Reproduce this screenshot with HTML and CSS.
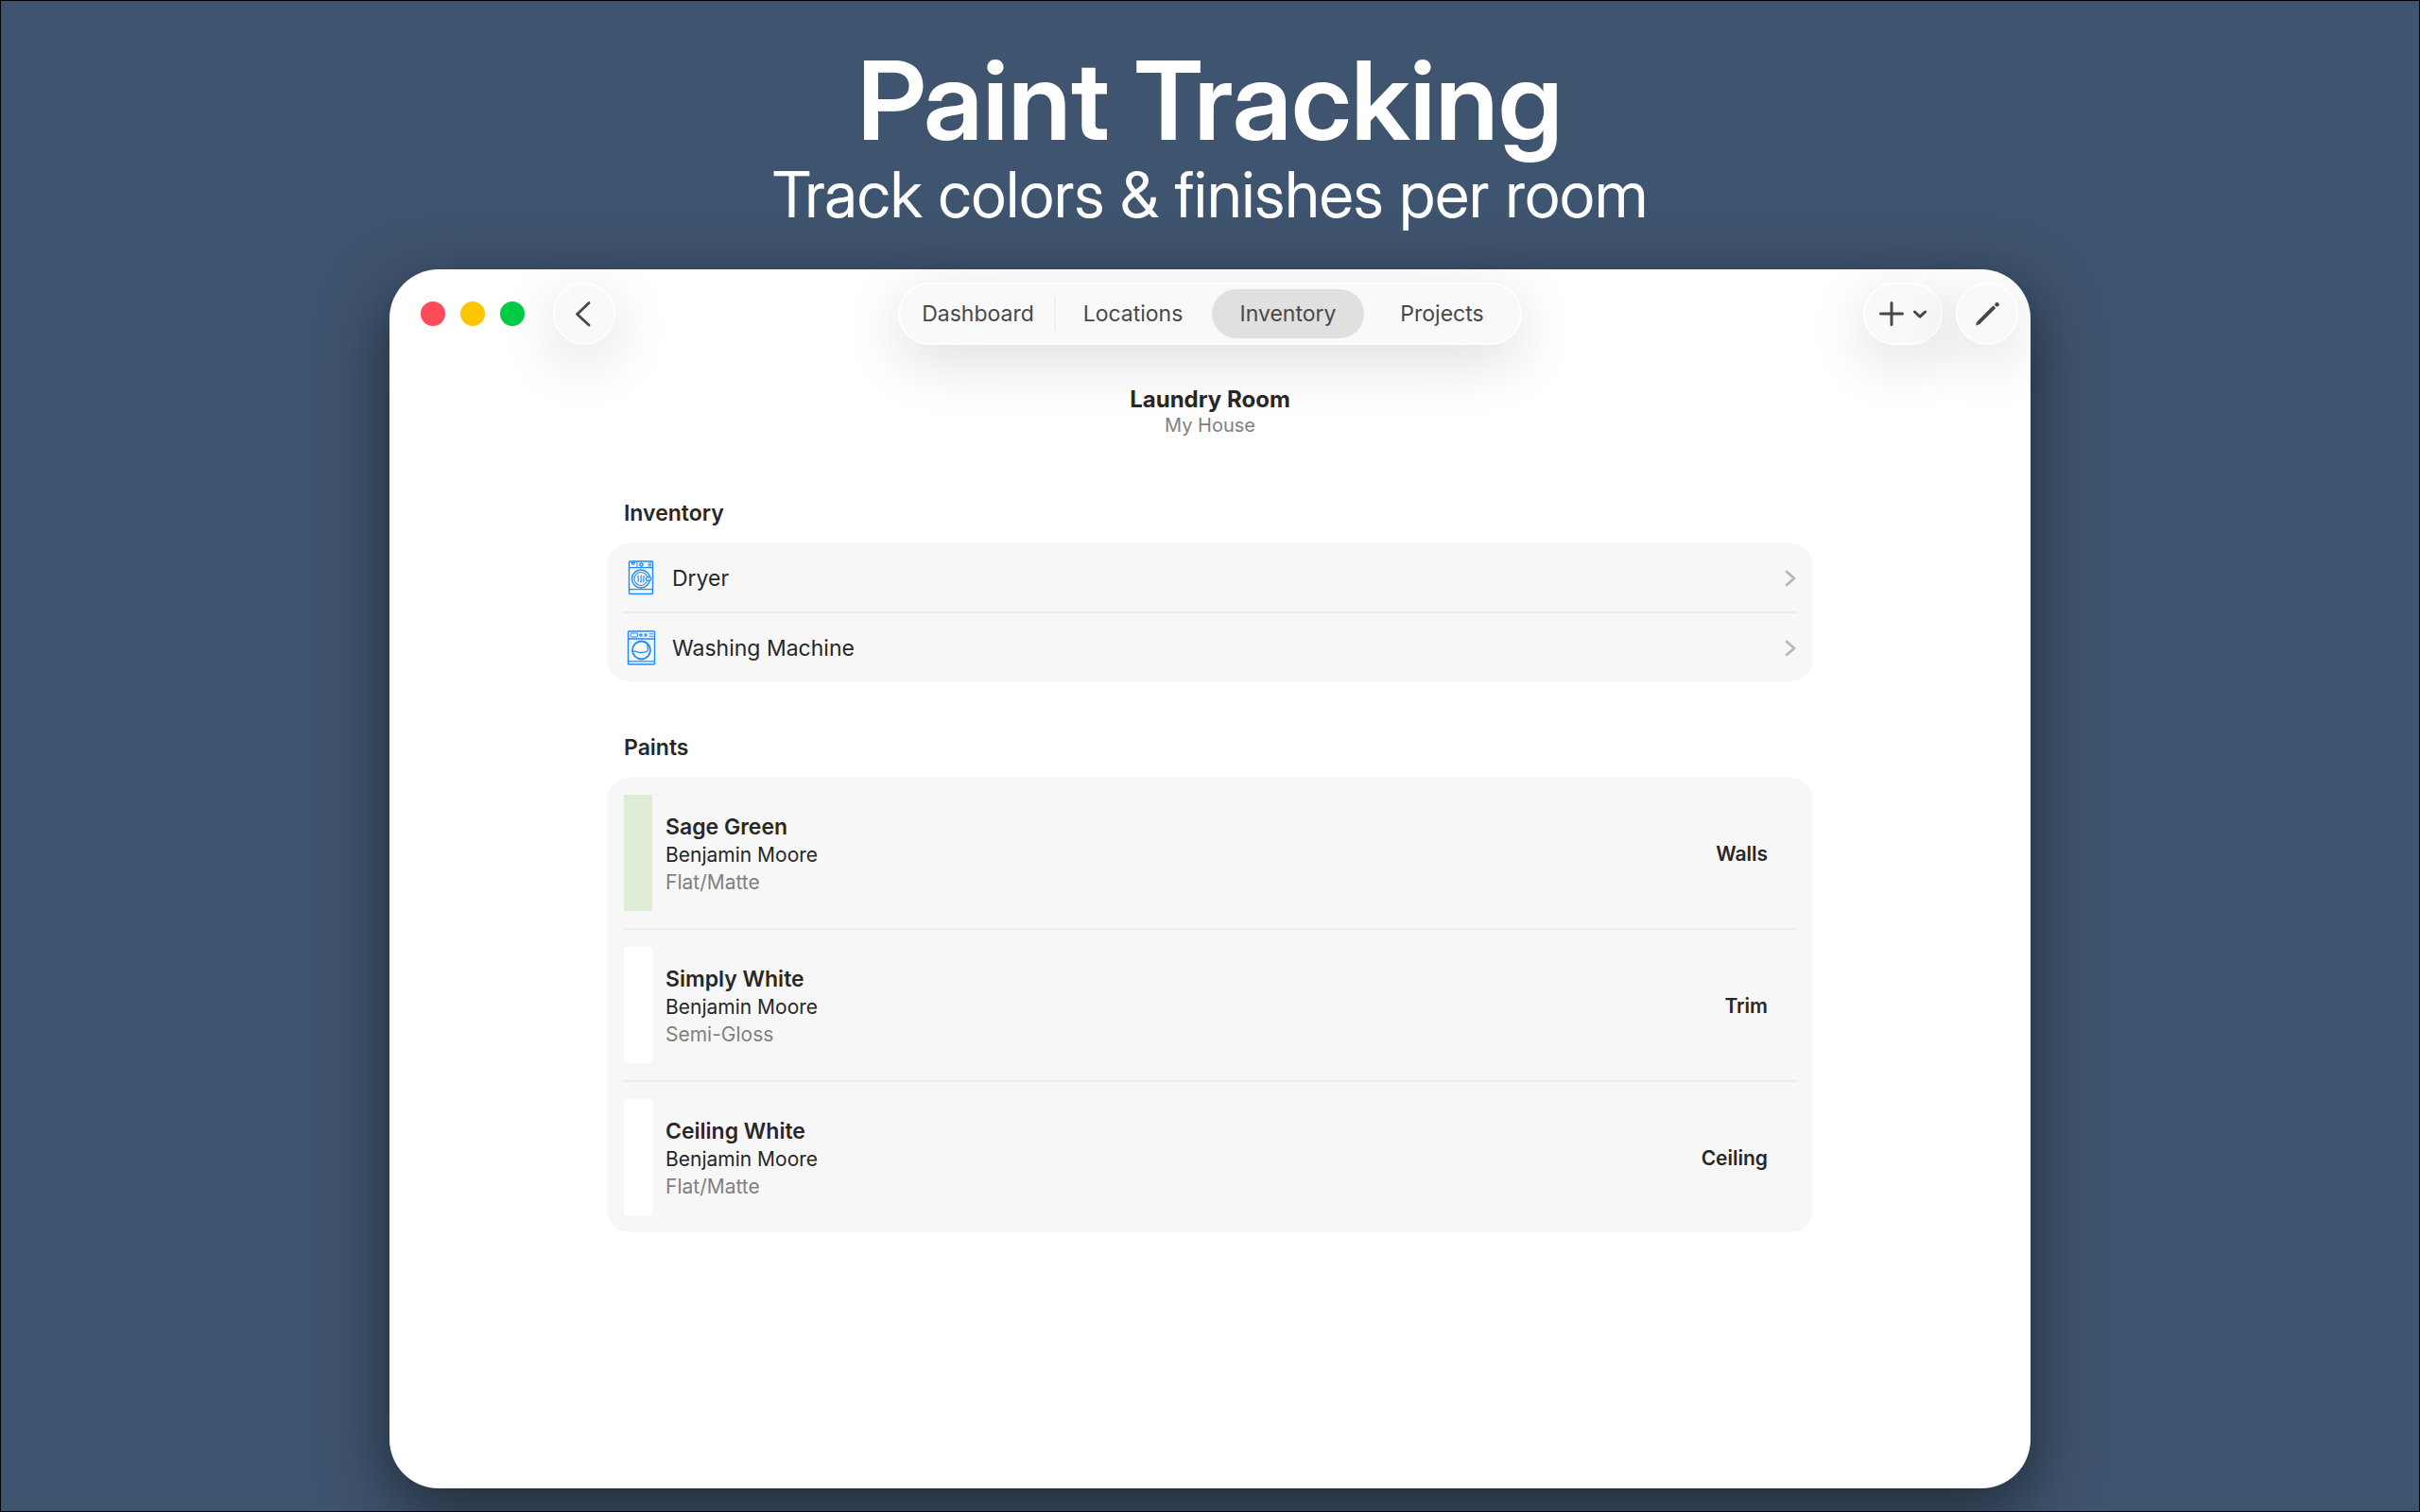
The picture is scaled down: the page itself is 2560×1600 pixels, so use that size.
FILE: index.html
```html
<!DOCTYPE html>
<html lang="en">
<head>
<meta charset="utf-8">
<meta name="viewport" content="width=device-width, initial-scale=1">
<title>Paint Tracking</title>
<link rel="stylesheet" href="styles.css">
</head>
<body>
<div class="page">
  <header class="hero">
    <h1 class="hero-title">Paint Tracking</h1>
    <p class="hero-subtitle">Track colors &amp; finishes per room</p>
  </header>

  <main class="window">
    <div class="toolbar">
      <div class="toolbar-start">
        <div class="lights">
          <button class="light light-close" type="button" aria-label="Close"></button>
          <button class="light light-minimize" type="button" aria-label="Minimize"></button>
          <button class="light light-zoom" type="button" aria-label="Zoom"></button>
        </div>
        <button class="tool" type="button" aria-label="Back">
          <svg class="tool-icon" width="30" height="30" viewBox="0 0 30 30" aria-hidden="true"><path d="M20 3.500 L7.500 15.500 L20 27" fill="none" stroke="currentColor" stroke-width="2.800" stroke-linecap="round" stroke-linejoin="round"/></svg>
        </button>
      </div>

      <nav class="tabs" aria-label="Sections">
        <a class="tab tab-divided" href="#dashboard">Dashboard</a>
        <a class="tab" href="#locations">Locations</a>
        <a class="tab tab-current" href="#inventory" aria-current="page">Inventory</a>
        <a class="tab" href="#projects">Projects</a>
      </nav>

      <div class="toolbar-end">
        <button class="tool tool-wide" type="button" aria-label="Add">
          <svg width="26" height="26" viewBox="0 0 26 26" aria-hidden="true"><path d="M13 1.500 V24.500 M1.500 13 H24.500" fill="none" stroke="currentColor" stroke-width="3" stroke-linecap="round"/></svg>
          <svg width="14" height="10" viewBox="0 0 14 10" aria-hidden="true"><path d="M1.500 3 L7 8.200 L12.500 3" fill="none" stroke="currentColor" stroke-width="3" stroke-linecap="round" stroke-linejoin="round"/></svg>
        </button>
        <button class="tool" type="button" aria-label="Edit">
          <svg width="28" height="28" viewBox="0 0 28 28" aria-hidden="true"><path d="M2.500 26 L3.800 22.400 L20.500 5.700 L22.800 8 L6.100 24.700 Z" fill="currentColor" stroke="currentColor" stroke-width="0.800" stroke-linejoin="round"/><circle cx="24.500" cy="4.300" r="2.300" fill="currentColor"/></svg>
        </button>
      </div>
    </div>

    <div class="room">
      <h2 class="room-name">Laundry Room</h2>
      <p class="room-home">My House</p>
    </div>

    <div class="content">
      <section class="group">
        <h3 class="group-title">Inventory</h3>
        <ul class="card">
          <li class="row">
            <a class="item" href="#dryer">
              <svg class="item-icon" width="36" height="38" viewBox="0 0 36 38" aria-hidden="true">
                <g fill="none" stroke="currentColor">
                  <rect x="5.500" y="1" width="25" height="34.500" rx="1" stroke-width="1.400"/>
                  <path d="M5.500 7.700 H30.500 M5.500 30.700 H30.500" stroke-width="1.300"/>
                  <path d="M14 1 V7.700 M7.500 2.500 H12 M8.500 3 V4.100 H11 V3 M25.500 2.800 H29 M25.500 4.500 H29 M25.500 6 H29" stroke-width="1"/>
                  <circle cx="18.500" cy="4.500" r="1.500" stroke-width="1.500"/>
                  <circle cx="18" cy="19.500" r="9.500" stroke-width="1.500"/>
                  <circle cx="18" cy="19.500" r="7" stroke-width="1.100"/>
                  <path d="M15.500 16 C13.500 18 17 20 14.800 23 M18.500 15.500 C16.500 18 20 20 17.500 23.500 M21.500 16 C19.500 18 22.500 20 20.500 23" stroke-width="1.200"/>
                  <rect x="23.500" y="17.800" width="5" height="3.400" rx="1" fill="#f7f7f7" stroke-width="1.200"/>
                </g>
              </svg>
              <span class="item-name">Dryer</span>
              <svg class="item-chevron" width="12" height="18" viewBox="0 0 12 18" aria-hidden="true"><path d="M2 2 L10 9 L2 16" fill="none" stroke="currentColor" stroke-width="2.800" stroke-linecap="round" stroke-linejoin="round"/></svg>
            </a>
          </li>
          <li class="row">
            <a class="item" href="#washing-machine">
              <svg class="item-icon" width="36" height="38" viewBox="0 0 36 38" aria-hidden="true">
                <g fill="none" stroke="currentColor">
                  <rect x="4.500" y="1" width="28" height="35" rx="1" stroke-width="1.400"/>
                  <path d="M4.500 9 H32.500 M4.500 32.800 H32.500" stroke-width="1.300"/>
                  <rect x="7" y="3" width="7.500" height="4" rx="0.500" stroke-width="1"/>
                  <circle cx="18" cy="5" r="1.200" stroke-width="1.200"/>
                  <circle cx="23" cy="5" r="1.200" stroke-width="1.200"/>
                  <path d="M26.500 3.800 H31 M26.500 6.200 H31" stroke-width="1.100"/>
                  <circle cx="18.500" cy="21" r="9.500" stroke-width="1.800"/>
                  <path d="M10 22.500 C12.500 21 15 24 18 23.500 C21 23 23.500 24 25.500 21 C25.500 18 25.500 16.500 24.500 15" stroke-width="1.300"/>
                </g>
              </svg>
              <span class="item-name">Washing Machine</span>
              <svg class="item-chevron" width="12" height="18" viewBox="0 0 12 18" aria-hidden="true"><path d="M2 2 L10 9 L2 16" fill="none" stroke="currentColor" stroke-width="2.800" stroke-linecap="round" stroke-linejoin="round"/></svg>
            </a>
          </li>
        </ul>
      </section>

      <section class="group">
        <h3 class="group-title">Paints</h3>
        <ul class="card">
          <li class="row paint">
            <span class="swatch swatch-sage"></span>
            <div class="paint-info">
              <p class="paint-name">Sage Green</p>
              <p class="paint-brand">Benjamin Moore</p>
              <p class="paint-finish">Flat/Matte</p>
            </div>
            <span class="paint-surface">Walls</span>
          </li>
          <li class="row paint">
            <span class="swatch swatch-white"></span>
            <div class="paint-info">
              <p class="paint-name">Simply White</p>
              <p class="paint-brand">Benjamin Moore</p>
              <p class="paint-finish">Semi-Gloss</p>
            </div>
            <span class="paint-surface">Trim</span>
          </li>
          <li class="row paint">
            <span class="swatch swatch-white"></span>
            <div class="paint-info">
              <p class="paint-name">Ceiling White</p>
              <p class="paint-brand">Benjamin Moore</p>
              <p class="paint-finish">Flat/Matte</p>
            </div>
            <span class="paint-surface">Ceiling</span>
          </li>
        </ul>
      </section>
    </div>
  </main>
</div>
</body>
</html>
```
FILE: styles.css
```css
*,
*::before,
*::after {
  box-sizing: border-box;
}

body,
h1,
h2,
h3,
p,
ul {
  margin: 0;
  padding: 0;
}

body {
  font-family: Inter, "Liberation Sans", sans-serif;
  font-size: 23px;
  color: #272727;
  background: #3f546e;
}

ul {
  list-style: none;
}

a {
  color: inherit;
  text-decoration: none;
}

button {
  padding: 0;
  border: 0;
  color: inherit;
  font: inherit;
}

svg {
  display: block;
  flex: none;
}

.page {
  display: flex;
  flex-direction: column;
  align-items: center;
  min-height: 100vh;
  padding-bottom: 24px;
  border: 1px solid #000;
  overflow: hidden;
}

/* Headline above the window */
.hero {
  padding: 36px 24px 48px;
  color: #fff;
  font-family: "Inter Display", Inter, "Liberation Sans", sans-serif;
  text-align: center;
}

.hero-title {
  font-size: 116px;
  font-weight: 600;
  line-height: 138px;
}

.hero-subtitle {
  font-size: 67px;
  font-weight: 400;
  line-height: 62px;
}

/* Application window */
.window {
  flex: 1;
  width: 67.9%;
  border-radius: 52px;
  background: #fff;
  box-shadow: 0 24px 72px rgba(0, 0, 0, 0.5);
}

.toolbar {
  display: grid;
  grid-template-columns: 1fr auto 1fr;
  align-items: center;
  padding: 14px 13px 0;
  color: #484848;
}

.toolbar-start {
  display: flex;
  align-items: center;
  gap: 30px;
  padding-left: 20px;
}

.toolbar-end {
  display: flex;
  justify-content: flex-end;
  gap: 14px;
}

.lights {
  display: flex;
  gap: 16px;
}

.light {
  width: 26px;
  height: 26px;
  border-radius: 50%;
}

.light-close {
  background: #ff4a59;
}

.light-minimize {
  background: #ffc500;
}

.light-zoom {
  background: #00cb47;
}

.tool,
.tabs {
  height: 66px;
  border: 2px solid #fff;
  border-radius: 33px;
  background: #f9f9f9;
  box-shadow: 0 16px 64px rgba(0, 0, 0, 0.14);
}

.tool {
  display: flex;
  align-items: center;
  justify-content: center;
  gap: 10px;
  width: 66px;
}

.tool-wide {
  width: 84px;
}

.tabs {
  display: grid;
  grid-template-columns: 163px 163px 165px 161px;
  align-items: center;
  padding: 0 2px;
}

.tab {
  display: flex;
  align-items: center;
  justify-content: center;
  height: 52px;
  border-radius: 26px;
}

.tab-divided {
  height: 36px;
  border-right: 2px solid #f0f0f0;
  border-radius: 0;
}

.tab-current {
  margin: 0 2px;
  background: #e0e0e0;
}

.room {
  padding-top: 44px;
  text-align: center;
}

.room-name {
  font-size: 24px;
  font-weight: 700;
  line-height: 28px;
}

.room-home {
  color: #808080;
  font-size: 20px;
  line-height: 26px;
}

/* Grouped lists */
.content {
  display: flex;
  flex-direction: column;
  gap: 56px;
  width: 1276px;
  max-width: 92%;
  margin: 0 auto;
  padding: 66px 0 24px;
}

.group-title {
  padding: 0 18px 18px;
  font-size: 23px;
  font-weight: 600;
  line-height: 28px;
}

.card {
  padding: 0 18px;
  border-radius: 24px;
  background: #f7f7f7;
}

.row + .row {
  border-top: 2px solid #ebebeb;
}

.item {
  display: flex;
  align-items: center;
  height: 72px;
  padding-top: 2px;
}

.item-icon {
  color: #1a8cff;
}

.item-name {
  flex: 1;
  margin-left: 15px;
}

.item-chevron {
  color: #b8b8b8;
}

.paint {
  display: flex;
  align-items: center;
  padding: 18px 0;
}

.swatch {
  align-self: stretch;
  width: 30px;
  min-height: 123px;
}

.swatch-sage {
  background: #e0edd6;
}

.swatch-white {
  background: #fff;
}

.paint-info {
  flex: 1;
  margin-left: 14px;
  padding-top: 3px;
  font-size: 21px;
  line-height: 29px;
}

.paint-name {
  font-size: 23px;
  font-weight: 600;
}

.paint-finish {
  color: #808080;
}

.paint-surface {
  margin-right: 30px;
  padding-top: 2px;
  font-size: 21px;
  font-weight: 600;
}
```
